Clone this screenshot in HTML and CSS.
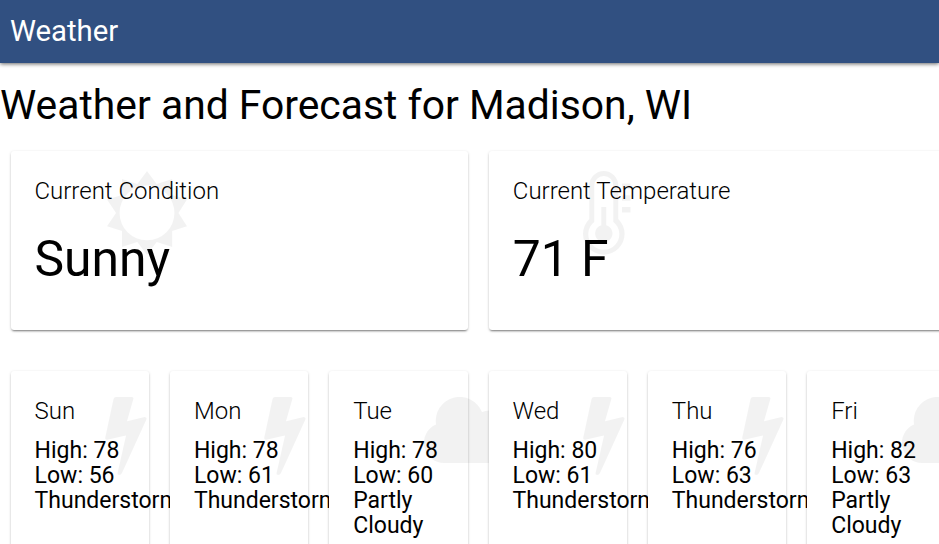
FILE: index.html
```html
<!DOCTYPE html>
<html lang="en">
<head>
<meta charset="utf-8">
<title>Weather</title>
<link rel="stylesheet" href="styles.css">
</head>
<body>
<svg class="defs" aria-hidden="true">
  <symbol id="sun" viewBox="0 0 80 84"><path fill-rule="evenodd" d="M40 0L49.700 13L65.200 8V24.100L80 28.500L71.500 42L80 55.200L65.200 60V76L49.700 71L40 84L30.300 71L15 76V60L0 55.200L9 42L0 28.500L15 24.100V8L30.300 13ZM40 14.500A27.400 27.400 0 1 0 40 69.300A27.400 27.400 0 1 0 40 14.500Z"/></symbol>
  <symbol id="thermometer" viewBox="0 0 48 84"><path fill-rule="evenodd" d="M6.300 14.500A14.500 14.500 0 0 1 35.300 14.500V48A20.800 20.800 0 1 1 6.300 48ZM11.300 14.500V51A15.500 15.500 0 1 0 30.300 51V14.500A9.500 9.500 0 0 0 11.300 14.500Z"/><path d="M18.300 36h5v18.200a8.700 8.700 0 1 1-5 0zM39 12.500h8.500v5.500H39zM39 24.300h8.500v5.500H39zM39 36h8.500v5.500H39z"/></symbol>
  <symbol id="bolt" viewBox="0 0 42 78"><path d="M11 0H26.500Q29 0 28.300 2.300L22 24.300L39.500 20Q42.300 20 41.300 22.800L17 76Q15.800 78.300 13.500 77.800Q12 77.300 12.800 75L21 38.600L2.500 42.800Q-.3 43 .3 40.300L8.500 2Q9 0 11 0Z"/></symbol>
  <symbol id="cloud" viewBox="0 0 96 66"><path d="M20 66A20 20 0 0 1 12 27.600A24 24 0 0 1 58 15A17 17 0 0 1 82 31A18 18 0 0 1 78 66Z"/></symbol>
</svg>
<header class="toolbar">Weather</header>
<main class="page">
  <h1 class="title">Weather and Forecast for Madison, WI</h1>
  <section class="current">
    <article class="card">
      <svg class="icon icon-sun"><use href="#sun"/></svg>
      <h2 class="label">Current Condition</h2>
      <p class="value">Sunny</p>
    </article>
    <article class="card">
      <svg class="icon icon-thermometer"><use href="#thermometer"/></svg>
      <h2 class="label">Current Temperature</h2>
      <p class="value">71 F</p>
    </article>
  </section>
  <section class="forecast">
    <article class="card day"><svg class="icon icon-bolt"><use href="#bolt"/></svg><h2 class="label">Sun</h2><p>High: 78</p><p>Low: 56</p><p>Thunderstorms</p></article>
    <article class="card day"><svg class="icon icon-bolt"><use href="#bolt"/></svg><h2 class="label">Mon</h2><p>High: 78</p><p>Low: 61</p><p>Thunderstorms</p></article>
    <article class="card day"><svg class="icon icon-cloud"><use href="#cloud"/></svg><h2 class="label">Tue</h2><p>High: 78</p><p>Low: 60</p><p>Partly Cloudy</p></article>
    <article class="card day"><svg class="icon icon-bolt"><use href="#bolt"/></svg><h2 class="label">Wed</h2><p>High: 80</p><p>Low: 61</p><p>Thunderstorms</p></article>
    <article class="card day"><svg class="icon icon-bolt"><use href="#bolt"/></svg><h2 class="label">Thu</h2><p>High: 76</p><p>Low: 63</p><p>Thunderstorms</p></article>
    <article class="card day"><svg class="icon icon-cloud"><use href="#cloud"/></svg><h2 class="label">Fri</h2><p>High: 82</p><p>Low: 63</p><p>Partly Cloudy</p></article>
  </section>
</main>
</body>
</html>
```
FILE: styles.css
```css
* { box-sizing: border-box; }
html { height: 100%; overflow: hidden; }
body { margin: 0; height: 100%; overflow: hidden; background: #fff; color: #000; font-family: Roboto, sans-serif; }
h1, h2, p { margin: 0; font-weight: 400; }
.defs { position: absolute; width: 0; height: 0; }
.toolbar { height: 63px; padding-left: 10px; background: #315081; color: #fff; font-size: 29.300px; line-height: 62px; box-shadow: 0 1px 4px rgba(0, 0, 0, .6); }
.title { padding: 17px 0 0; height: 88px; font-size: 40.850px; line-height: 50px; white-space: nowrap; }
.current { display: grid; grid-template-columns: 457.500px 457.500px; gap: 20.800px; margin-left: 10.500px; }
.card { position: relative; height: 179px; padding: 24px; background: #fff; border-radius: 3px; box-shadow: 0 1px 3px rgba(0, 0, 0, .2), 0 2px 2px -1px rgba(0, 0, 0, .4); }
.label { position: relative; font-size: 24px; line-height: 32px; font-weight: 300; white-space: nowrap; }
.value { position: relative; margin-top: 21px; font-size: 49.800px; line-height: 62px; }
.forecast { display: grid; grid-template-columns: repeat(6, 138.400px); gap: 20.930px; margin: 41px 0 0 10.600px; }
.day { height: 240px; font-size: 23px; line-height: 25px; }
.day .label { margin-bottom: 11px; }
.day p { position: relative; }
.icon { position: absolute; fill: rgba(0, 0, 0, .05); }
.icon-sun { left: 96px; top: 20px; width: 80px; height: 84px; }
.icon-thermometer { left: 94px; top: 20px; width: 48px; height: 84px; }
.icon-bolt { left: 94px; top: 26px; width: 42px; height: 78px; }
.icon-cloud { left: 95px; top: 26px; width: 96px; height: 66px; }
```
